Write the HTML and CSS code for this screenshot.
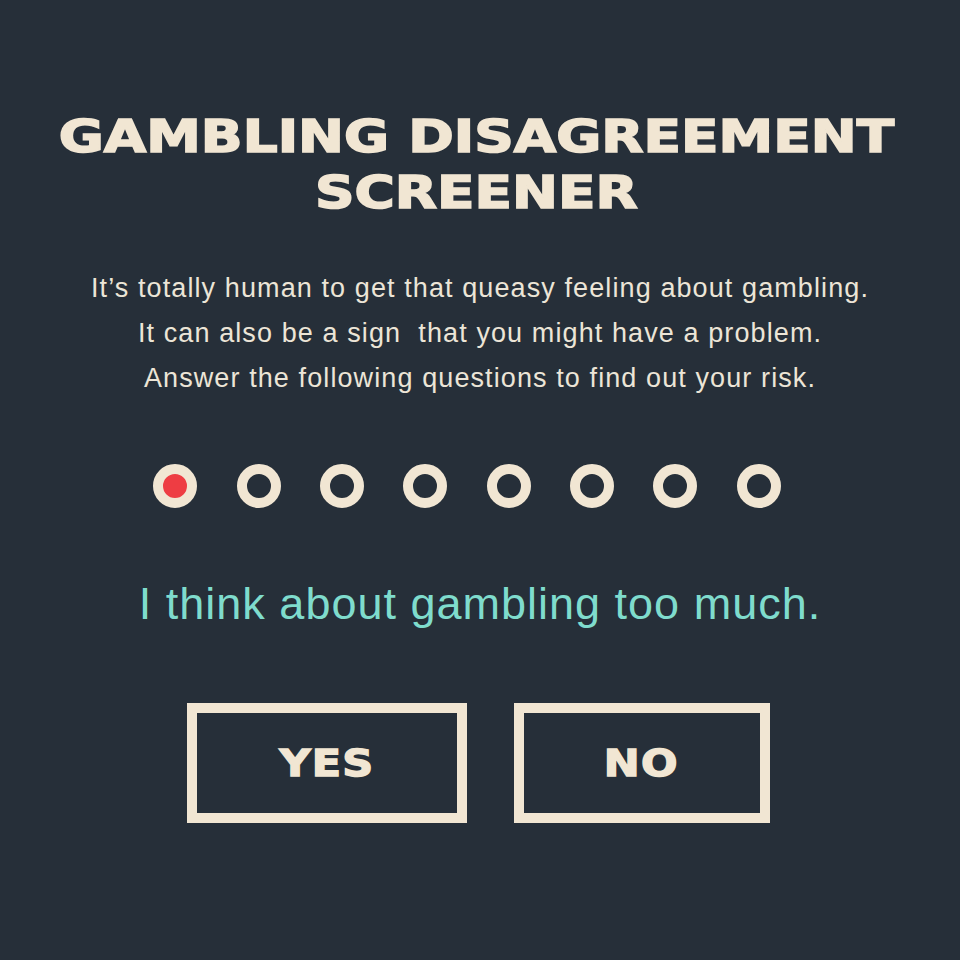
FILE: index.html
```html
<!DOCTYPE html>
<html lang="en-US">
    <head>
        <meta charset="utf-8">
        <title>Gambling Disagreement Screener</title>
        <link rel="stylesheet" href="styles.css">
    </head>

    <body>
        <main class="screener">
            <h1 class="screenerTitle">GAMBLING DISAGREEMENT<br>SCREENER</h1>

            <p class="intro">
                It’s totally human to get that queasy feeling about gambling.<br>
                It can also be a sign&nbsp; that you might have a problem.<br>
                Answer the following questions to find out your risk.
            </p>

            <!-- one dot per question, the current one is filled -->
            <ol class="progress">
                <li class="dot current"></li>
                <li class="dot"></li>
                <li class="dot"></li>
                <li class="dot"></li>
                <li class="dot"></li>
                <li class="dot"></li>
                <li class="dot"></li>
                <li class="dot"></li>
            </ol>

            <p class="question">I think about gambling too much.</p>

            <div class="answers">
                <button class="answer yes" type="button"><span>YES</span></button>
                <button class="answer no" type="button"><span>NO</span></button>
            </div>
        </main>
    </body>
</html>
```

FILE: styles.css
```css
:root {
    --bg: #262f39;
    --cream: #f1e6d3;
    --teal: #7fdccd;
    --red: #ee3d43;
}

body {
    margin: 0;
    min-height: 960px;
    background-color: var(--bg);
    color: var(--cream);
    font-family: 'Liberation Sans', Arial, sans-serif;
}

.screener {
    display: flex;
    flex-direction: column;
    align-items: center;
    padding-top: 109px;
}

/* heavy, wide display face: stretch and thicken the bold */
.screenerTitle {
    margin: 0 8px 0 0;
    font-family: 'DejaVu Sans', sans-serif;
    font-weight: bold;
    font-size: 45px;
    line-height: 56px;
    text-align: center;
    transform: scaleX(1.22);
    -webkit-text-stroke: 1.6px var(--cream);
}

.intro {
    margin: 45px 0 0;
    font-size: 27px;
    line-height: 45px;
    letter-spacing: 1.1px;
    text-align: center;
    color: #ece5d7;
}

.progress {
    display: flex;
    gap: 39.4px;
    list-style: none;
    margin: 63px 26px 0 0;
    padding: 0;
}

.dot {
    width: 44px;
    height: 44px;
    box-sizing: border-box;
    border: 10px solid var(--cream);
    border-radius: 50%;
}

.dot.current {
    background-color: var(--red);
}

.question {
    margin: 70px 0 0;
    font-size: 45px;
    line-height: 52px;
    letter-spacing: 1px;
    color: var(--teal);
}

.answers {
    display: flex;
    gap: 47px;
    margin: 73px 4px 0 0;
}

.answer {
    display: flex;
    align-items: center;
    justify-content: center;
    height: 120px;
    padding: 0;
    border: 10px solid var(--cream);
    background: transparent;
    color: var(--cream);
    font-family: 'DejaVu Sans', sans-serif;
    font-weight: bold;
    font-size: 37px;
}

.answer > span {
    display: inline-block;
    transform: scaleX(1.16);
    letter-spacing: 1px;
    -webkit-text-stroke: 1.4px var(--cream);
}

.yes {
    width: 280px;
}

.no {
    width: 256px;
}
```
